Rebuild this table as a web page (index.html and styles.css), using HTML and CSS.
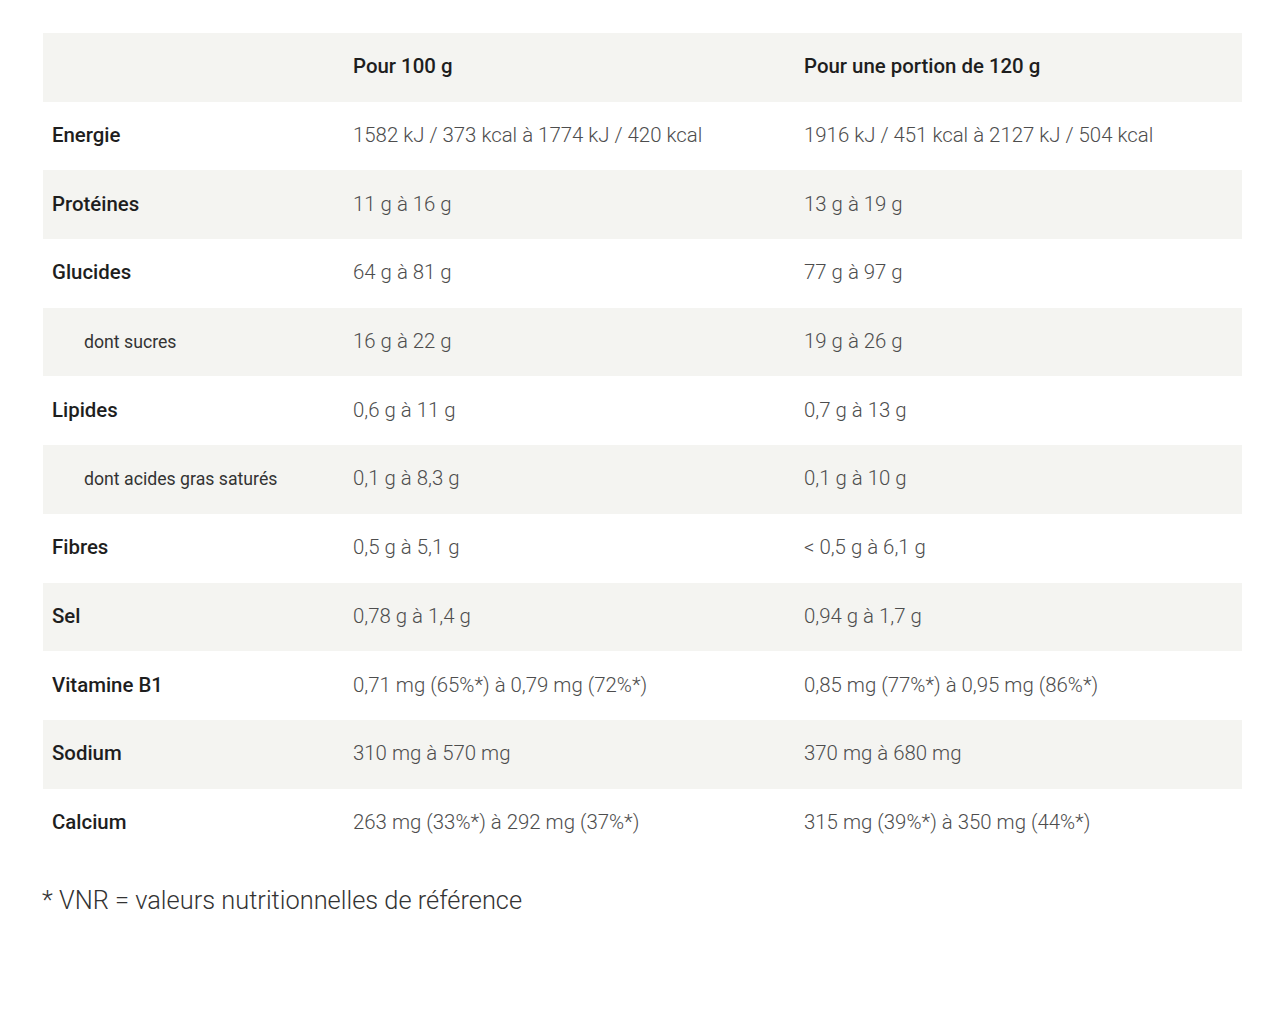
FILE: index.html
```html
<!DOCTYPE html>
<html lang="fr">
<head>
<meta charset="utf-8">
<link rel="stylesheet" href="styles.css">
</head>
<body>
<div class="wrap">
<table class="nutri">
<colgroup><col class="c1"><col class="c2"><col class="c3"></colgroup>
<thead>
<tr><th></th><th>Pour 100 g</th><th>Pour une portion de 120 g</th></tr>
</thead>
<tbody>
<tr><th>Energie</th><td>1582 kJ / 373 kcal à 1774 kJ / 420 kcal</td><td>1916 kJ / 451 kcal à 2127 kJ / 504 kcal</td></tr>
<tr><th>Protéines</th><td>11 g à 16 g</td><td>13 g à 19 g</td></tr>
<tr><th>Glucides</th><td>64 g à 81 g</td><td>77 g à 97 g</td></tr>
<tr><th class="sub">dont sucres</th><td>16 g à 22 g</td><td>19 g à 26 g</td></tr>
<tr><th>Lipides</th><td>0,6 g à 11 g</td><td>0,7 g à 13 g</td></tr>
<tr><th class="sub">dont acides gras saturés</th><td>0,1 g à 8,3 g</td><td>0,1 g à 10 g</td></tr>
<tr><th>Fibres</th><td>0,5 g à 5,1 g</td><td>&lt; 0,5 g à 6,1 g</td></tr>
<tr><th>Sel</th><td>0,78 g à 1,4 g</td><td>0,94 g à 1,7 g</td></tr>
<tr><th>Vitamine B1</th><td>0,71 mg (65%*) à 0,79 mg (72%*)</td><td>0,85 mg (77%*) à 0,95 mg (86%*)</td></tr>
<tr><th>Sodium</th><td>310 mg à 570 mg</td><td>370 mg à 680 mg</td></tr>
<tr><th>Calcium</th><td>263 mg (33%*) à 292 mg (37%*)</td><td>315 mg (39%*) à 350 mg (44%*)</td></tr>
</tbody>
</table>
<p class="note">* VNR = valeurs nutritionnelles de référence</p>
</div>
</body>
</html>
```
FILE: styles.css
```css
html, body {
  margin: 0;
  padding: 0;
  background: #ffffff;
}
body {
  font-family: Roboto, "Liberation Sans", sans-serif;
  color: #222;
}
.wrap {
  padding: 33px 38px 0 43px;
}
.nutri {
  width: 1199px;
  border-collapse: collapse;
  table-layout: fixed;
}
.c1 { width: 300px; }
.c2 { width: 451px; }
.c3 { width: 448px; }
.nutri th,
.nutri td {
  height: 68.7px;
  padding: 0 10px 2px 10px;
  text-align: left;
  vertical-align: middle;
  font-size: 20.4px;
  box-sizing: border-box;
}
.nutri thead th {
  padding-bottom: 3px;
}
.nutri tbody th {
  padding-left: 9px;
}
.nutri th {
  font-weight: 500;
  color: #1e1e1e;
}
.nutri td {
  font-weight: 300;
  color: #4d4d4d;
}
.nutri thead tr,
.nutri tbody tr:nth-child(even) {
  background: #f4f4f1;
}
.nutri tbody th.sub {
  font-weight: 400;
  font-size: 17.7px;
  padding-left: 41px;
  padding-bottom: 0;
  color: #333;
}
.note {
  margin: 28px 0 0 -1px;
  font-size: 25.4px;
  font-weight: 300;
  color: #333;
}
```
